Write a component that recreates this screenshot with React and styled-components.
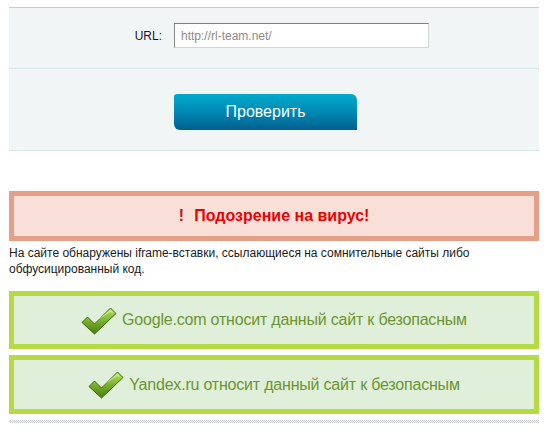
import React from "react";
import styled, { createGlobalStyle } from "styled-components";

const GlobalStyle = createGlobalStyle`
  html, body { margin: 0; padding: 0; background: #fff; }
  body { font-family: "Liberation Sans", Arial, sans-serif; }
  * { box-sizing: border-box; }
`;

const Page = styled.div`
  padding: 7px 10px 0 9px;
`;

const FormPanel = styled.div`
  background: #f1f5f6;
  border-top: 1px solid #c3cdd1;
  border-bottom: 1px solid #dbe6e8;
`;

const FormRow = styled.div`
  display: grid;
  grid-template-columns: 165px 1fr;
  align-items: center;
  padding: ${(p) => p.$pad};
  border-bottom: ${(p) => (p.$divider ? "1px solid #dbe6e8" : "none")};
`;

const Label = styled.label`
  justify-self: end;
  padding-right: 12px;
  font-size: 12px;
  color: #1a1a1a;
`;

const UrlInput = styled.input`
  width: 255px;
  height: 25px;
  margin: 0;
  padding: 0 6px;
  font-family: "Liberation Sans", Arial, sans-serif;
  font-size: 12px;
  color: #333;
  background: #fff;
  border: 1px solid;
  border-color: #7f7f7f #d4d4d4 #d4d4d4 #8a8a8a;
  outline: none;
  &::placeholder { color: #8c8c8c; }
`;

const CheckButton = styled.button`
  width: 183px;
  height: 36px;
  margin: 0;
  padding: 0;
  border: none;
  border-radius: 3px 6px 0 6px;
  background: linear-gradient(to bottom, #00abcc 0%, #0089b4 50%, #005f8e 100%);
  color: #fff;
  font-family: "Liberation Sans", Arial, sans-serif;
  font-size: 16px;
  cursor: pointer;
`;

const Alert = styled.div`
  margin-top: 40px;
  height: 50px;
  display: flex;
  align-items: center;
  justify-content: center;
  background: #f8e0d8;
  border: 5px solid #e39f87;
  font-size: 16px;
  font-weight: bold;
  color: #ee0000;
`;

const Bang = styled.span`
  color: #c41a1a;
  margin-right: 10px;
  font-size: 17px;
`;

const Note = styled.p`
  margin: 4px 0 0;
  font-size: 12px;
  line-height: 16px;
  color: #1a1a1a;
`;

const SafeBox = styled.div`
  margin-top: ${(p) => p.$top}px;
  height: ${(p) => p.$h}px;
  display: flex;
  align-items: center;
  justify-content: center;
  gap: 5px;
  background: #e0efda;
  border: 5px solid #b5db44;
  font-size: 16px;
  letter-spacing: -0.2px;
  color: #6b9530;
`;

const CheckIcon = styled.svg`
  width: 36px;
  height: 28px;
  flex: none;
  margin-top: 1px;
`;

const Dotted = styled.div`
  margin-top: 6px;
  height: 3px;
  background: repeating-conic-gradient(#c4c8cc 0 25%, #ffffff 0 50%) 0 0 / 2px 2px;
`;

const Check = ({ id }) => (
  <CheckIcon viewBox="0 0 36 28" aria-hidden="true">
    <defs>
      <linearGradient id={id} x1="0" y1="0" x2="0" y2="1">
        <stop offset="0" stopColor="#b6e36a" />
        <stop offset="0.45" stopColor="#7fb62e" />
        <stop offset="1" stopColor="#4a7a12" />
      </linearGradient>
    </defs>
    <path
      d="M1 15.5 L6.5 10 L13.5 17 L29.5 1 L35 6.5 L13.5 27 Z"
      fill={`url(#${id})`}
      stroke="#3f6a10"
      strokeWidth="1"
      strokeLinejoin="round"
    />
    <path
      d="M14 15 L29.5 2.5 L33 6 L29 5 Z"
      fill="#d4f29a"
      opacity="0.7"
    />
  </CheckIcon>
);

export default function App() {
  return (
    <>
      <GlobalStyle />
      <Page>
        <FormPanel>
          <FormRow $pad="15px 0 20px" $divider>
            <Label htmlFor="url">URL:</Label>
            <UrlInput id="url" placeholder="http://rl-team.net/" />
          </FormRow>
          <FormRow $pad="25px 0 20px">
            <span />
            <CheckButton>Проверить</CheckButton>
          </FormRow>
        </FormPanel>

        <Alert>
          <Bang>!</Bang>
          Подозрение на вирус!
        </Alert>
        <Note>
          На сайте обнаружены iframe-вставки, ссылающиеся на сомнительные сайты либо
          обфусицированный код.
        </Note>

        <SafeBox $top={14} $h={58}>
          <Check id="g1" />
          Google.com относит данный сайт к безопасным
        </SafeBox>
        <SafeBox $top={6} $h={59}>
          <Check id="g2" />
          Yandex.ru относит данный сайт к безопасным
        </SafeBox>
        <Dotted />
      </Page>
    </>
  );
}
